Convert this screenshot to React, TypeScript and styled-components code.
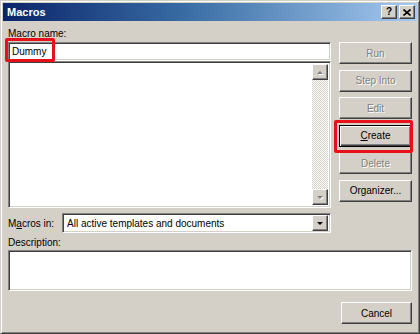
import React from 'react';
import styled, { createGlobalStyle, css } from 'styled-components';

const face = '#d4d0c8';
const shadow = '#808080';
const darkShadow = '#404040';

const GlobalStyle = createGlobalStyle`
  html, body {
    margin: 0;
    padding: 0;
    background: ${face};
  }
  body {
    font-family: "Liberation Sans", Arial, sans-serif;
    font-size: 10px;
    color: #000;
  }
`;

const raised = css`
  border: 1px solid;
  border-color: #fff ${darkShadow} ${darkShadow} #fff;
  box-shadow: inset -1px -1px 0 ${shadow}, inset 1px 1px 0 ${face};
  background: ${face};
`;

const sunken = css`
  border: 1px solid;
  border-color: ${shadow} #fff #fff ${shadow};
  box-shadow: inset 1px 1px 0 ${darkShadow}, inset -1px -1px 0 ${face};
  background: #fff;
`;

const Window = styled.div`
  box-sizing: border-box;
  width: 420px;
  height: 334px;
  padding: 2px;
  border: 1px solid;
  border-color: ${face} ${darkShadow} ${darkShadow} ${face};
  box-shadow: inset 1px 1px 0 #fff, inset -1px -1px 0 ${shadow};
  background: ${face};
  display: flex;
  flex-direction: column;
`;

const TitleBar = styled.div`
  height: 18px;
  display: flex;
  align-items: center;
  padding: 0 2px 0 4px;
  background: linear-gradient(90deg, #0a246a 0%, #3a6ea5 45%, #a6caf0 100%);
`;

const Title = styled.span`
  flex: 1;
  color: #fff;
  font-weight: bold;
  font-size: 11px;
`;

const TitleButton = styled.div<{ $gap?: boolean }>`
  ${raised};
  box-sizing: border-box;
  width: 16px;
  height: 14px;
  margin-left: ${({ $gap }) => ($gap ? '2px' : '0')};
  display: flex;
  align-items: center;
  justify-content: center;
  font-weight: bold;
  font-size: 10px;
  line-height: 1;
`;

const Body = styled.div`
  flex: 1;
  padding: 6px 2px 0 5px;
  display: flex;
  flex-direction: column;
`;

const TopGrid = styled.div`
  display: grid;
  grid-template-columns: 323px 73px;
  column-gap: 8px;
`;

const LeftCol = styled.div`
  display: flex;
  flex-direction: column;
`;

const Label = styled.div`
  height: 15px;
  line-height: 13px;
  white-space: nowrap;
`;

const Key = styled.span`
  text-decoration: underline;
`;

const Annotated = styled.div<{ $l: number; $t: number; $w: number; $h: number }>`
  position: relative;
  &::after {
    content: '';
    position: absolute;
    left: ${({ $l }) => $l}px;
    top: ${({ $t }) => $t}px;
    width: ${({ $w }) => $w}px;
    height: ${({ $h }) => $h}px;
    box-sizing: border-box;
    border: 3px solid #e8101a;
    border-radius: 2px;
    pointer-events: none;
  }
`;

const NameInput = styled.div`
  ${sunken};
  box-sizing: border-box;
  height: 19px;
  padding: 0 3px;
  display: flex;
  align-items: center;
`;

const ListBox = styled.div`
  ${sunken};
  box-sizing: border-box;
  height: 147px;
  display: flex;
  justify-content: flex-end;
  padding: 2px;
`;

const ScrollBar = styled.div`
  width: 16px;
  display: flex;
  flex-direction: column;
  background: repeating-conic-gradient(#fff 0 25%, ${face} 0 50%) 0 0 / 2px 2px;
`;

const ScrollTrack = styled.div`
  flex: 1;
`;

const ArrowButton = styled.div`
  ${raised};
  box-sizing: border-box;
  width: 16px;
  height: 16px;
  display: flex;
  align-items: center;
  justify-content: center;
`;

const ComboRow = styled.div`
  margin-top: 5px;
  display: flex;
  align-items: center;
  gap: 0;
`;

const ComboLabel = styled.span`
  width: 54px;
  white-space: nowrap;
`;

const Combo = styled.div`
  ${sunken};
  box-sizing: border-box;
  flex: 1;
  height: 20px;
  display: flex;
  align-items: center;
  padding: 2px;
`;

const ComboText = styled.span`
  flex: 1;
  padding-left: 2px;
`;

const ButtonCol = styled.div`
  padding-top: 15px;
  display: flex;
  flex-direction: column;
  gap: 5.6px;
`;

const Button = styled.div<{ $disabled?: boolean; $default?: boolean }>`
  ${raised};
  box-sizing: border-box;
  height: 22px;
  display: flex;
  align-items: center;
  justify-content: center;
  white-space: nowrap;
  color: ${({ $disabled }) => ($disabled ? shadow : '#000')};
  text-shadow: ${({ $disabled }) => ($disabled ? '1px 1px 0 #fff' : 'none')};
  ${({ $default }) =>
    $default &&
    css`
      border: 1px solid #000;
      box-shadow: inset 1px 1px 0 #fff, inset -1px -1px 0 ${darkShadow},
        inset -2px -2px 0 ${shadow};
    `}
`;

const DescLabel = styled.div`
  margin-top: 3px;
  height: 14px;
  line-height: 13px;
`;

const DescBox = styled.div`
  ${sunken};
  box-sizing: border-box;
  width: 404px;
  height: 41px;
`;

const Footer = styled.div`
  width: 404px;
  margin-top: 11px;
  display: flex;
  justify-content: flex-end;
`;

const CancelButton = styled(Button)`
  width: 71px;
`;

const Arrow = ({ dir, disabled }: { dir: 'up' | 'down'; disabled?: boolean }) => {
  const points = dir === 'up' ? '1,4 4,1 7,4' : '1,1 4,4 7,1';
  return (
    <svg width="8" height="5" viewBox="0 0 8 5">
      {disabled && (
        <polygon points={points} fill="#fff" transform="translate(1 1)" />
      )}
      <polygon points={points} fill={disabled ? shadow : '#000'} />
    </svg>
  );
};

export default function App() {
  return (
    <>
      <GlobalStyle />
      <Window>
        <TitleBar>
          <Title>Macros</Title>
          <TitleButton>?</TitleButton>
          <TitleButton $gap>
            <svg width="8" height="7" viewBox="0 0 8 7">
              <path d="M0.5 0.5 L7.5 6.5 M7.5 0.5 L0.5 6.5" stroke="#000" strokeWidth="1.6" />
            </svg>
          </TitleButton>
        </TitleBar>
        <Body>
          <TopGrid>
            <LeftCol>
              <Label>
                <Key>M</Key>acro name:
              </Label>
              <Annotated $l={-3} $t={-4} $w={50} $h={24}>
                <NameInput>Dummy</NameInput>
              </Annotated>
              <ListBox>
                <ScrollBar>
                  <ArrowButton>
                    <Arrow dir="up" disabled />
                  </ArrowButton>
                  <ScrollTrack />
                  <ArrowButton>
                    <Arrow dir="down" disabled />
                  </ArrowButton>
                </ScrollBar>
              </ListBox>
              <ComboRow>
                <ComboLabel>
                  M<Key>a</Key>cros in:
                </ComboLabel>
                <Combo>
                  <ComboText>All active templates and documents</ComboText>
                  <ArrowButton>
                    <Arrow dir="down" />
                  </ArrowButton>
                </Combo>
              </ComboRow>
            </LeftCol>
            <ButtonCol>
              <Button $disabled>Run</Button>
              <Button $disabled>Step Into</Button>
              <Button $disabled>Edit</Button>
              <Annotated $l={-5} $t={-5} $w={79} $h={33}>
                <Button $default>
                  <Key>C</Key>reate
                </Button>
              </Annotated>
              <Button $disabled>Delete</Button>
              <Button>Organizer...</Button>
            </ButtonCol>
          </TopGrid>
          <DescLabel>Description:</DescLabel>
          <DescBox />
          <Footer>
            <CancelButton>Cancel</CancelButton>
          </Footer>
        </Body>
      </Window>
    </>
  );
}
